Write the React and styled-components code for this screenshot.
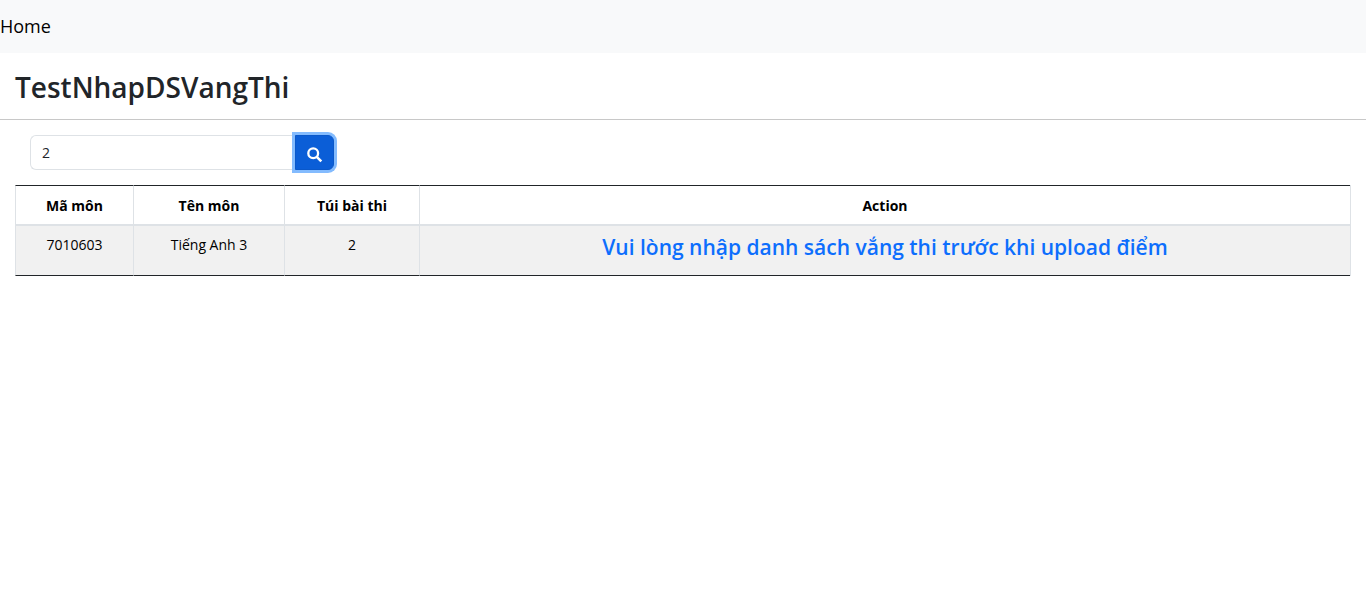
import React, { useState } from "react";
import styled, { createGlobalStyle } from "styled-components";

const GlobalStyle = createGlobalStyle`
  *, *::before, *::after { box-sizing: border-box; }
  body {
    margin: 0;
    background: #fff;
    color: #212529;
    font-family: "Segoe UI", "Open Sans", "Noto Sans", sans-serif;
    font-size: 14px;
    line-height: 22px;
  }
`;

const Nav = styled.nav`
  display: flex;
  padding: 13px 0;
  background: #f8f9fa;
`;

const NavLink = styled.a`
  color: #000;
  font-size: 18px;
  line-height: 27px;
  text-decoration: none;
`;

const Header = styled.header`
  padding: 17px 15px 14px;
  border-bottom: 1px solid #c8c8c8;
`;

const Title = styled.h1`
  margin: 0;
  font-size: 28px;
  font-weight: 600;
  line-height: 35px;
`;

const Content = styled.main`
  padding: 15px;
`;

const SearchForm = styled.form`
  display: flex;
  width: 304px;
  height: 35px;
  margin: 0 15px 15px;
`;

const SearchInput = styled.input`
  flex: 1;
  min-width: 0;
  padding: 6px 11px;
  border: 1px solid #dee2e6;
  border-right: 0;
  border-radius: 6px 0 0 6px;
  background: #fff;
  color: #212529;
  font: inherit;
  outline: 0;
`;

const SearchButton = styled.button`
  display: flex;
  align-items: center;
  justify-content: center;
  width: 39px;
  padding: 4px 0 0;
  border: 1px solid #0a58ca;
  border-radius: 0 6px 6px 0;
  background: #0b5ed7;
  color: #fff;
  box-shadow: 0 0 0 3px #83bbfe;
  cursor: pointer;
`;

const Table = styled.table`
  width: 100%;
  table-layout: fixed;
  border-collapse: separate;
  border-spacing: 0;
  border-right: 1px solid #dee2e6;
  color: #000;
  text-align: center;
`;

const Column = styled.col`
  width: ${({ $width }) => $width || "auto"};
`;

const HeadCell = styled.th`
  height: 41px;
  padding: 9px 8px 7px;
  border-top: 1px solid #212529;
  border-bottom: 2px solid #dee2e6;
  border-left: 1px solid #dee2e6;
  font-weight: 700;
`;

const Cell = styled.td`
  height: 50px;
  padding: 8px;
  border-bottom: 1px solid #212529;
  border-left: 1px solid #dee2e6;
  background: #f1f1f1;
  vertical-align: top;
`;

const Notice = styled.h2`
  margin: 0;
  color: #0d6efd;
  font-size: 21px;
  font-weight: 600;
  line-height: 27px;
`;

const columns = [
  { name: "Mã môn", width: "118px" },
  { name: "Tên môn", width: "151px" },
  { name: "Túi bài thi", width: "135px" },
  { name: "Action" },
];

const rows = [{ code: "7010603", subject: "Tiếng Anh 3", bag: "2" }];

function SearchIcon() {
  return (
    <svg width="16" height="16" viewBox="0 0 16 16" fill="none" stroke="currentColor" strokeWidth="2.3" aria-hidden="true">
      <circle cx="6.2" cy="6.2" r="4.9" />
      <path d="M9.8 9.8 14.3 14.3" strokeWidth="2.6" />
    </svg>
  );
}

export default function App() {
  const [query, setQuery] = useState("2");
  return (
    <>
      <GlobalStyle />
      <Nav>
        <NavLink href="#">Home</NavLink>
      </Nav>
      <Header>
        <Title>TestNhapDSVangThi</Title>
      </Header>
      <Content>
        <SearchForm onSubmit={(e) => e.preventDefault()}>
          <SearchInput aria-label="Túi bài thi" value={query} onChange={(e) => setQuery(e.target.value)} />
          <SearchButton type="submit" aria-label="Search">
            <SearchIcon />
          </SearchButton>
        </SearchForm>
        <Table>
          <colgroup>
            {columns.map((c) => (
              <Column key={c.name} $width={c.width} />
            ))}
          </colgroup>
          <thead>
            <tr>
              {columns.map((c) => (
                <HeadCell key={c.name} scope="col">{c.name}</HeadCell>
              ))}
            </tr>
          </thead>
          <tbody>
            {rows.map((r) => (
              <tr key={r.code}>
                <Cell>{r.code}</Cell>
                <Cell>{r.subject}</Cell>
                <Cell>{r.bag}</Cell>
                <Cell>
                  <Notice>Vui lòng nhập danh sách vắng thi trước khi upload điểm</Notice>
                </Cell>
              </tr>
            ))}
          </tbody>
        </Table>
      </Content>
    </>
  );
}
